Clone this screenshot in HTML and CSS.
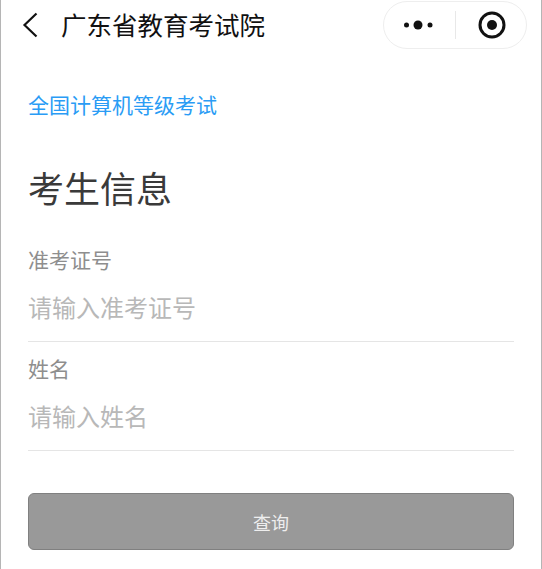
FILE: index.html
```html
<!DOCTYPE html>
<html lang="zh-CN">
<head>
    <meta charset="UTF-8">
    <meta name="viewport" content="width=device-width, initial-scale=1.0">
    <title>广东省教育考试院</title>
    <link rel="stylesheet" href="styles.css">
</head>
<body>
    <header class="header">
        <svg class="back" width="18" height="28" viewBox="0 0 18 28">
            <path d="M15.500 2.500 L3.500 14 L15.500 25.500" fill="none" stroke="#111" stroke-width="2.200"/>
        </svg>
        <h1>广东省教育考试院</h1>
        <div class="capsule">
            <svg width="30" height="12" viewBox="0 0 30 12">
                <circle cx="3.500" cy="6" r="2.500" fill="#111"/>
                <circle cx="15" cy="6" r="4.500" fill="#111"/>
                <circle cx="27" cy="6" r="2.500" fill="#111"/>
            </svg>
            <span class="capsule-line"></span>
            <svg width="28" height="28" viewBox="0 0 28 28">
                <circle cx="14" cy="14" r="12" fill="none" stroke="#111" stroke-width="3"/>
                <circle cx="14" cy="14" r="5" fill="#111"/>
            </svg>
        </div>
    </header>

    <div class="container">
        <a class="exam-link" href="#">全国计算机等级考试</a>
        <h2 class="section-title">考生信息</h2>

        <div class="field">
            <label for="ticket">准考证号</label>
            <input type="text" id="ticket" placeholder="请输入准考证号">
        </div>
        <div class="field">
            <label for="name">姓名</label>
            <input type="text" id="name" placeholder="请输入姓名">
        </div>

        <button class="submit">查询</button>
    </div>
</body>
</html>
```

FILE: styles.css
```css
* {
    margin: 0;
    padding: 0;
    box-sizing: border-box;
    font-family: "Liberation Sans", "Noto Sans CJK SC", sans-serif;
}

html,
body {
    height: 100%;
    overflow: hidden;
}

body {
    background-color: white;
    color: #333;
    border-left: 1px solid #b5b5b5;
    border-right: 1px solid #b5b5b5;
}

.header {
    display: flex;
    align-items: center;
    height: 50px;
    padding: 0 14px 0 20px;
}

.back {
    margin-right: 22px;
}

.header h1 {
    flex: 1;
    padding-bottom: 4px;
    font-size: 25.500px;
    font-weight: 400;
    color: #111;
}

.capsule {
    display: flex;
    align-items: center;
    justify-content: space-between;
    width: 144px;
    height: 48px;
    padding: 0 20px 0 19px;
    border: 1px solid #eee;
    border-radius: 24px;
}

.capsule-line {
    width: 1px;
    height: 28px;
    background-color: #e8e8e8;
}

.container {
    padding: 0 27px;
}

.exam-link {
    display: block;
    margin-top: 42px;
    font-size: 21px;
    line-height: 28px;
    color: #2a9cf5;
    text-decoration: none;
}

.section-title {
    margin-top: 46px;
    font-size: 36px;
    font-weight: 400;
    line-height: 50px;
    color: #3a3a3a;
}

.field {
    border-bottom: 1px solid #e5e5e5;
}

.field label {
    display: block;
    font-size: 21px;
    line-height: 28px;
    color: #8e8e8e;
}

.section-title + .field {
    margin-top: 31px;
}

.field input {
    display: block;
    width: 100%;
    height: 66px;
    padding-top: 2px;
    border: none;
    outline: none;
    font-size: 24px;
    color: #333;
}

.field input::placeholder {
    color: #b8b8b8;
}

.field + .field {
    margin-top: 14px;
}

.submit {
    display: block;
    width: 100%;
    height: 57px;
    margin-top: 42px;
    background-color: #999;
    color: #eee;
    border: 1px solid #808080;
    border-radius: 6px;
    font-size: 18px;
}
```
